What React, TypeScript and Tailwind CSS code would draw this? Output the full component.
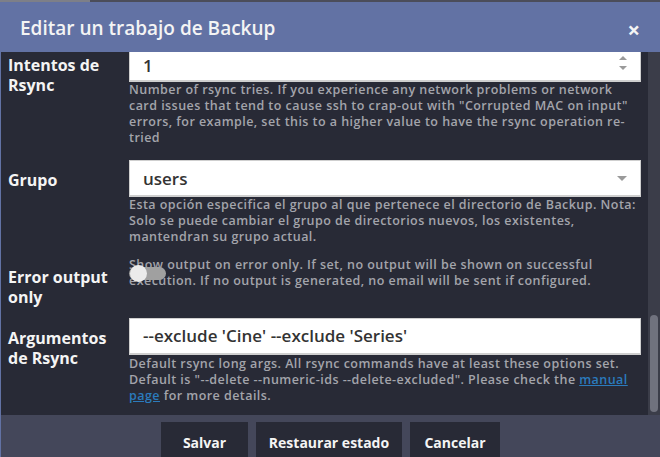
import React from "react";

const font = { fontFamily: '"Open Sans", "Noto Sans", sans-serif' };

function Label({ children }: { children: React.ReactNode }) {
  return (
    <div className="w-[128px] shrink-0 pl-[7px] pt-[10px] text-[16px] font-bold leading-[20px] text-[#f4f4f4]">
      {children}
    </div>
  );
}

function Help({ children }: { children: React.ReactNode }) {
  return (
    <div className="text-[12.5px] font-semibold leading-[16px] tracking-[0.45px] text-[#a3a4ab]">
      {children}
    </div>
  );
}

export default function App() {
  return (
    <div className="w-[660px] h-[457px] overflow-hidden bg-[#282a36] flex flex-col" style={font}>
      <div className="h-[2px] flex shrink-0">
        <div className="w-[90px] bg-[#7d7f88]" />
        <div className="flex-1 bg-[#4b4d5a]" />
      </div>
      <div className="h-[50px] shrink-0 bg-[#6272a4] flex items-center justify-between pl-[20px] pr-[20px] pt-[3px] z-10">
        <span className="text-[19px] font-semibold text-[#f4f4f4]">Editar un trabajo de Backup</span>
        <span className="text-[22px] font-bold text-[#f4f4f4] leading-none">×</span>
      </div>
      <div className="h-[363px] shrink-0 flex border-l border-[#6272a4]">
        <div className="flex-1 overflow-hidden">
          <div className="-mt-[7px] pr-[7px]">
            {/* Row 1 */}
            <div className="flex pb-[14px]">
              <Label>
                Intentos de
                <br />
                Rsync
              </Label>
              <div className="flex-1">
                <div className="h-[37px] bg-white border border-[#cfcfcf] border-b-2 flex items-center justify-between pl-[13px] pr-[12px]">
                  <span className="text-[17px] font-semibold text-[#333] pt-[6px]">1</span>
                  <svg width="10" height="16" viewBox="0 0 10 16">
                    <path d="M1 5 L5 1 L9 5 Z" fill="#9a9a9a" />
                    <path d="M1 11 L5 15 L9 11 Z" fill="#9a9a9a" />
                  </svg>
                </div>
                <Help>
                  Number of rsync tries. If you experience any network problems or network card issues that tend to cause ssh to crap-out with "Corrupted MAC on input" errors, for example, set this to a higher value to have the rsync operation re-tried
                </Help>
              </div>
            </div>
            {/* Row 2 */}
            <div className="flex pb-[12px]">
              <Label>Grupo</Label>
              <div className="flex-1">
                <div className="h-[37px] bg-white border border-[#cfcfcf] border-b-2 flex items-center justify-between pl-[13px] pr-[13px]">
                  <span className="text-[17px] font-semibold text-[#333] pt-[2px]">users</span>
                  <svg width="10" height="5" viewBox="0 0 10 5">
                    <path d="M0 0 L10 0 L5 5 Z" fill="#9a9a9a" />
                  </svg>
                </div>
                <Help>
                  Esta opción especifica el grupo al que pertenece el directorio de Backup. Nota: Solo se puede cambiar el grupo de directorios nuevos, los existentes, mantendran su grupo actual.
                </Help>
              </div>
            </div>
            {/* Row 3 */}
            <div className="flex pb-[11px]">
              <Label>
                Error output
                <br />
                only
              </Label>
              <div className="flex-1 relative">
                <Help>
                  Show output on error only. If set, no output will be shown on successful execution. If no output is generated, no email will be sent if configured.
                </Help>
                <div className="absolute left-0 top-[8px] w-[37px] h-[17px]">
                  <div className="absolute left-0 top-[2px] w-[37px] h-[13px] rounded-full bg-[#a0a0a0]" />
                  <div className="absolute left-[1px] top-0 w-[17px] h-[17px] rounded-full bg-[#ebebeb]" />
                </div>
              </div>
            </div>
            {/* Row 4 */}
            <div className="flex">
              <Label>
                Argumentos
                <br />
                de Rsync
              </Label>
              <div className="flex-1">
                <div className="h-[37px] bg-white border border-[#cfcfcf] border-b-2 flex items-center pl-[13px]">
                  <span className="text-[17px] font-semibold text-[#333]">--exclude 'Cine' --exclude 'Series'</span>
                </div>
                <div className="pt-[1px]">
                  <Help>
                    Default rsync long args. All rsync commands have at least these options set. Default is "--delete --numeric-ids --delete-excluded". Please check the{" "}
                    <span className="text-[#2b7bbd] underline">manual page</span> for more details.
                  </Help>
                </div>
              </div>
            </div>
          </div>
        </div>
        <div className="w-[12px] shrink-0 bg-[#3b3d49] relative">
          <div className="absolute left-[2px] top-[263px] w-[8px] h-[97px] rounded-full bg-[#70727e]" />
        </div>
      </div>
      <div className="flex-1 bg-[#44475a] border-l border-[#6272a4] flex justify-center gap-[8px] pt-[7px]">
        <div className="h-[40px] w-[87px] bg-[#282a36] flex items-center justify-center text-[14px] font-bold text-[#f4f4f4]">Salvar</div>
        <div className="h-[40px] w-[146px] bg-[#282a36] flex items-center justify-center text-[14px] font-bold text-[#f4f4f4]">Restaurar estado</div>
        <div className="h-[40px] w-[90px] bg-[#282a36] flex items-center justify-center text-[14px] font-bold text-[#f4f4f4]">Cancelar</div>
      </div>
    </div>
  );
}
